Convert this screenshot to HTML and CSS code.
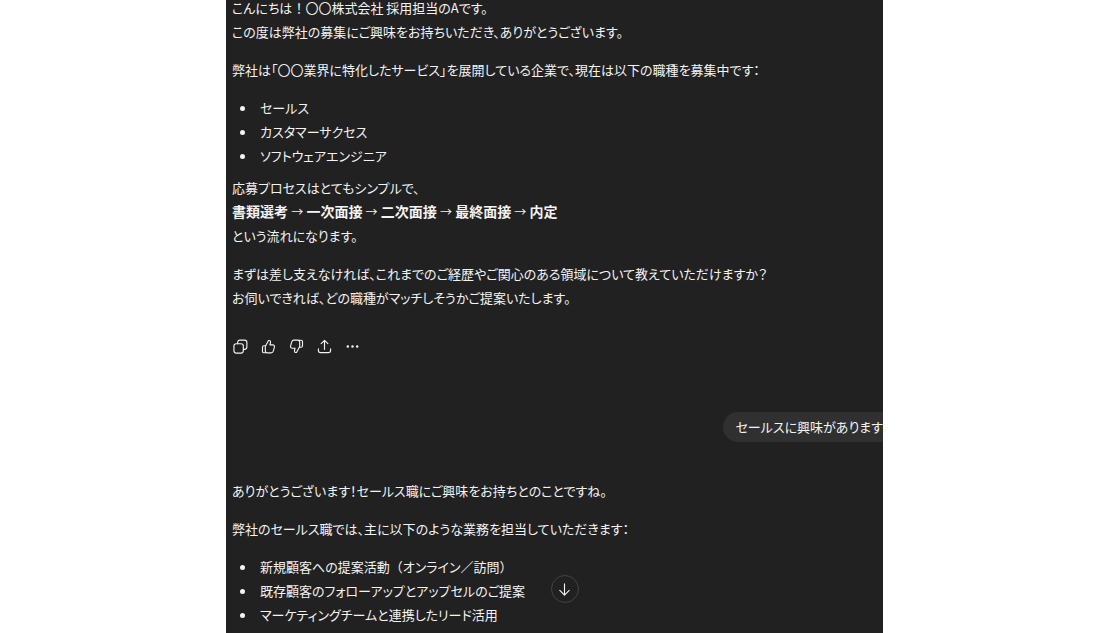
FILE: index.html
```html
<!DOCTYPE html>
<html lang="ja">
<head>
<meta charset="utf-8">
<meta name="viewport" content="width=device-width, initial-scale=1">
<title>採用チャット</title>
<link rel="stylesheet" href="styles.css">
</head>
<body>
<div class="page">
  <main class="panel">
    <div class="thread">
      <article class="reply">
        <p>こんにちは<span class="wide">！</span>〇〇株式会社 採用担当のAです。<br>この度は弊社の募集にご興味をお持ちいただき、ありがとうございます。</p>
        <p>弊社は「〇〇業界に特化したサービス」を展開している企業で、現在は以下の職種を募集中です：</p>
        <ul class="list">
          <li>セールス</li>
          <li>カスタマーサクセス</li>
          <li>ソフトウェアエンジニア</li>
        </ul>
        <p>応募プロセスはとてもシンプルで、<br><strong class="steps">書類選考 <span class="arrow">→</span> 一次面接 <span class="arrow">→</span> 二次面接 <span class="arrow">→</span> 最終面接 <span class="arrow">→</span> 内定</strong><br>という流れになります。</p>
        <p>まずは差し支えなければ、これまでのご経歴やご関心のある領域について教えていただけますか？<br>お伺いできれば、どの職種がマッチしそうかご提案いたします。</p>
      </article>
      <div class="actions">
        <button class="action" type="button" aria-label="コピー">
          <svg viewBox="0 0 16 16"><rect x="1" y="5" width="10" height="10" rx="2.4"/><path d="M5 5V3.600Q5 1.200 7.400 1.200H12.400Q14.800 1.200 14.800 3.600V8.600Q14.800 11 12.400 11H11"/></svg>
        </button>
        <button class="action" type="button" aria-label="良い回答">
          <svg viewBox="0 0 16 16"><path d="M5 7.200 8 1.600C9.700 1.300 10.500 2.400 10.100 4L9.500 6.200H12.400C14 6.200 14.700 7.300 14.300 8.700L13.100 13C12.700 14.300 12 14.800 10.700 14.800H6.600C5.200 14.800 4.600 13.800 4.600 12.600V8.600Q4.600 7.800 5 7.200ZM4.700 7.200H3Q1.600 7.200 1.600 8.700V13.200Q1.600 14.700 3 14.700H5.700"/></svg>
        </button>
        <button class="action" type="button" aria-label="良くない回答">
          <svg viewBox="0 0 16 16"><path d="M11 8.800 8 14.400C6.300 14.700 5.500 13.600 5.900 12L6.500 9.800H3.600C2 9.800 1.300 8.700 1.700 7.300L2.900 3C3.300 1.700 4 1.200 5.300 1.200H9.400C10.800 1.200 11.400 2.200 11.400 3.400V7.400Q11.400 8.200 11 8.800ZM11.300 8.800H13Q14.400 8.800 14.400 7.300V2.800Q14.400 1.300 13 1.300H10.300"/></svg>
        </button>
        <button class="action" type="button" aria-label="共有">
          <svg viewBox="0 0 16 16"><path d="M8 11V1.500M4.400 5 8 1.400 11.600 5M1.500 10.500V12.200Q1.500 14.500 3.800 14.500H12.200Q14.500 14.500 14.500 12.200V10.500"/></svg>
        </button>
        <button class="action" type="button" aria-label="その他">
          <svg class="dots" viewBox="0 0 16 16"><circle cx="3" cy="8" r="1.300"/><circle cx="8" cy="8" r="1.300"/><circle cx="13" cy="8" r="1.300"/></svg>
        </button>
      </div>
      <p class="bubble">セールスに興味があります</p>
      <article class="reply">
        <p>ありがとうございます！セールス職にご興味をお持ちとのことですね。</p>
        <p>弊社のセールス職では、主に以下のような業務を担当していただきます：</p>
        <ul class="list">
          <li><span>新規顧客への提案活動<span class="wide">（</span>オンライン／訪問<span class="wide">）</span></span></li>
          <li>既存顧客のフォローアップとアップセルのご提案</li>
          <li>マーケティングチームと連携したリード活用</li>
        </ul>
      </article>
    </div>
    <button class="jump" type="button" aria-label="一番下へ">
      <svg viewBox="0 0 16 16"><path d="M8 2V14M3 9 8 14 13 9"/></svg>
    </button>
  </main>
</div>
</body>
</html>
```
FILE: styles.css
```css
* {
  box-sizing: border-box;
}

body {
  margin: 0;
  background: #fff;
  color: #f3f3f3;
  font-family: "Noto Sans CJK JP", sans-serif;
  font-size: 13px;
  line-height: 24px;
  font-feature-settings: "palt";
}

.page {
  display: grid;
  grid-template-columns: 226fr 657fr 230fr;
  height: 100vh;
}

.panel {
  grid-column: 2;
  position: relative;
  min-width: 0;
  overflow: hidden;
  background: #212121;
}

/* The thread is scrolled slightly past its first line. */
.thread {
  display: flex;
  flex-direction: column;
  margin-top: -4px;
  padding-left: 6px;
}

.reply p,
.list {
  margin: 0 0 14px;
}

/* Punctuation that keeps its full-width cell. */
.wide {
  font-feature-settings: normal;
}

.steps {
  font-size: 14px;
  line-height: 20px;
}

.arrow {
  font-size: 12px;
  font-weight: 400;
}

.list {
  padding: 0 0 0 8px;
  list-style: none;
}

.list + p {
  margin-top: -6px;
}

.list li {
  display: grid;
  grid-template-columns: 20px 1fr;
  align-items: center;
}

.list li::before {
  content: "";
  width: 5px;
  height: 5px;
  border-radius: 50%;
  background: #f3f3f3;
}

.actions {
  display: flex;
  gap: 13px;
  margin-top: 14px;
  padding-left: 1px;
}

.action,
.jump {
  display: grid;
  place-items: center;
  padding: 0;
  border: 0;
  background: none;
  color: inherit;
}

.action {
  height: 16px;
}

.action svg,
.jump svg {
  width: 15px;
  height: 15px;
  fill: none;
  stroke: currentColor;
  stroke-width: 1.2;
  stroke-linecap: round;
  stroke-linejoin: round;
}

.action .dots {
  fill: currentColor;
  stroke: none;
}

/* The bubble runs past the clipped right edge of the panel. */
.bubble {
  align-self: flex-end;
  margin: 58px -13px 37px 0;
  padding: 3px 13px;
  border-radius: 15px;
  background: #303030;
  white-space: nowrap;
}

.jump {
  position: absolute;
  bottom: 30px;
  left: calc(50% - 4px);
  width: 28px;
  height: 28px;
  border: 1px solid #444;
  border-radius: 50%;
  background: #212121;
}
```
